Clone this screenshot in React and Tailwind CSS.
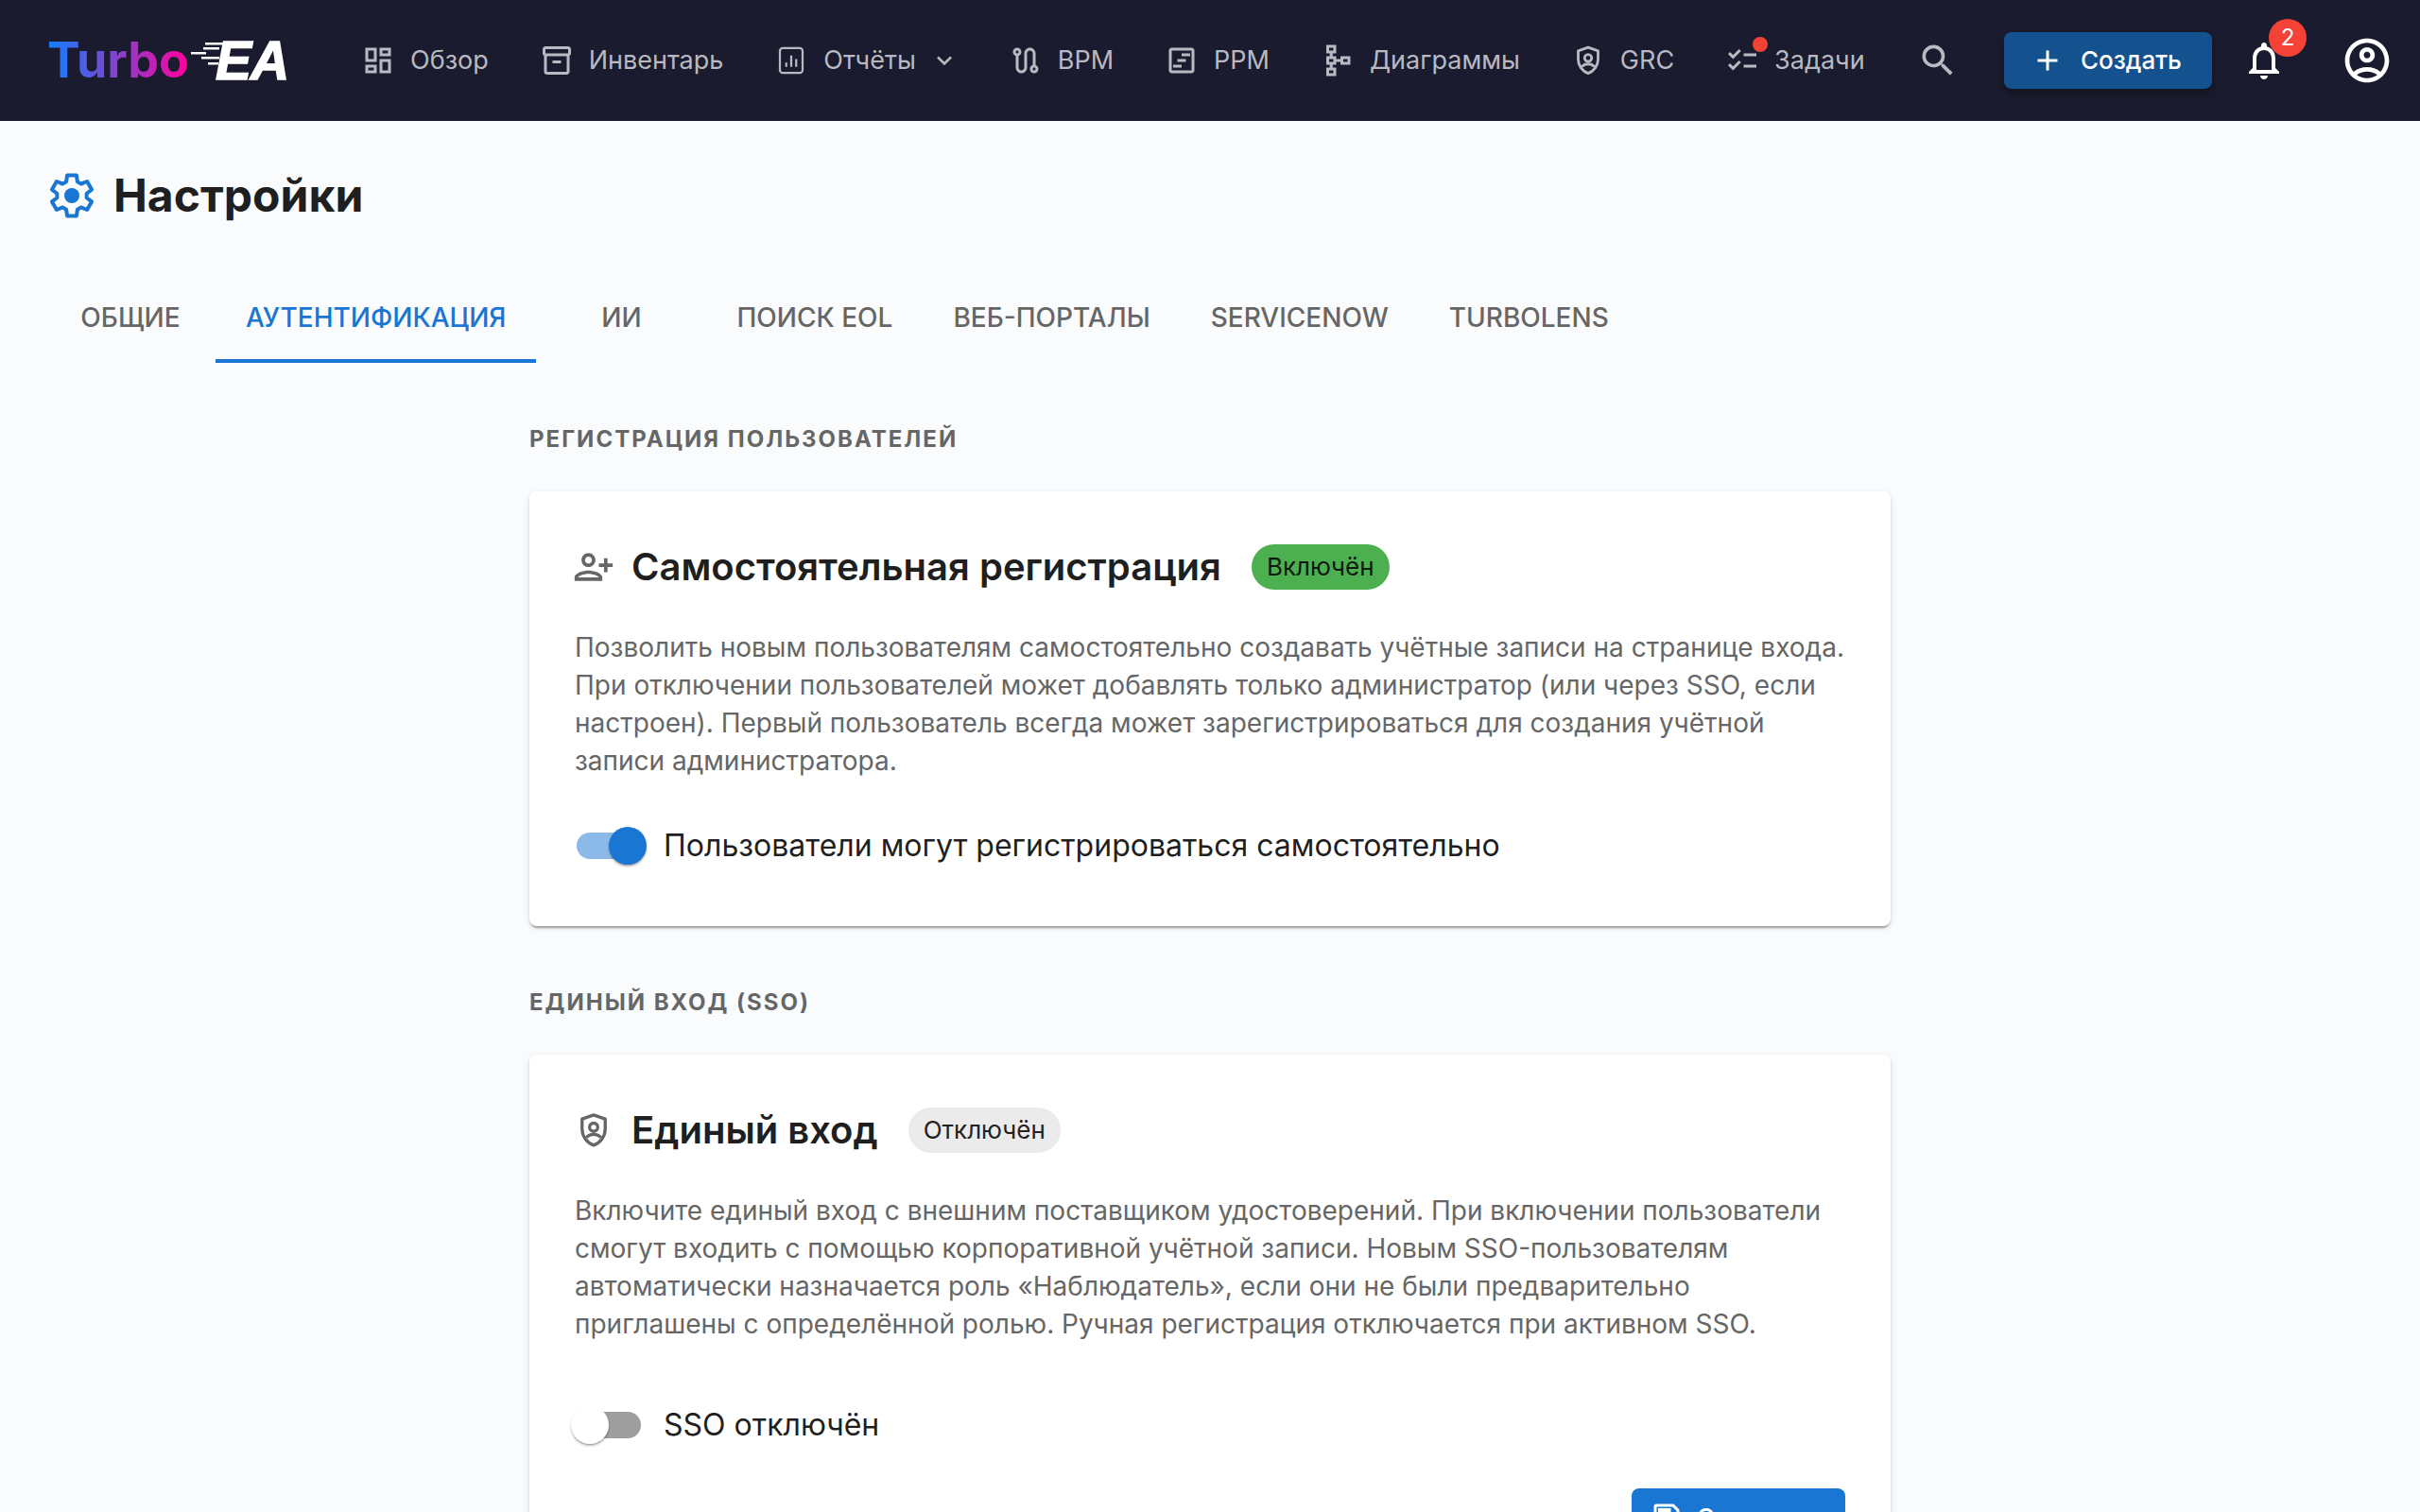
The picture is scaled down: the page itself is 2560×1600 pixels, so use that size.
import {
  MdOutlineDashboard, MdOutlineInventory2, MdExpandMore, MdOutlineRoute,
  MdOutlineViewTimeline, MdOutlineSchema, MdOutlineChecklist, MdSearch, MdAdd,
  MdOutlineNotifications, MdOutlineAccountCircle, MdOutlinePersonAdd, MdOutlineSave,
} from 'react-icons/md';

const FONT = 'font-["Inter","Noto_Sans",sans-serif]';

function ShieldAt({ className }) {
  return (
    <svg viewBox="0 0 24 24" fill="none" stroke="currentColor" className={className}>
      <path d="M12 2.8 5 5.2v6c0 4.5 2.9 8.4 7 9.9 4.1-1.5 7-5.4 7-9.9v-6L12 2.8Z" strokeWidth="1.9" strokeLinejoin="round" />
      <circle cx="12" cy="10.2" r="2.5" strokeWidth="1.9" />
      <path d="M7.6 16.4c1.1-1.3 2.6-1.9 4.4-1.9s3.3.6 4.4 1.9" strokeWidth="1.9" />
    </svg>
  );
}

function ReportIcon({ className }) {
  return (
    <svg viewBox="0 0 24 24" fill="none" stroke="currentColor" strokeWidth="1.5" className={className}>
      <rect x="4" y="3.2" width="16" height="17.6" rx="2" />
      <path d="M8.5 16.5v-3M12 16.5V8.5M15.5 16.5v-5.5" />
    </svg>
  );
}

// six toothed gear outline, top and bottom teeth flat
function gearPoints() {
  const pts = [];
  for (let i = 0; i < 6; i++) {
    const a = 90 + i * 60;
    [[-22, 7.9], [-13, 11], [13, 11], [22, 7.9]].forEach(([d, r]) => {
      const t = ((a + d) * Math.PI) / 180;
      pts.push(`${(12 + r * Math.cos(t)).toFixed(2)},${(12 - r * Math.sin(t)).toFixed(2)}`);
    });
  }
  return pts.join(' ');
}

function GearIcon({ className }) {
  return (
    <svg viewBox="0 0 24 24" className={className}>
      <polygon points={gearPoints()} fill="none" stroke="currentColor" strokeWidth="2" strokeLinejoin="round" />
      <circle cx="12" cy="12" r="4" fill="currentColor" />
    </svg>
  );
}

function Logo() {
  return (
    <div className="relative flex items-center w-[256px] h-[48px] select-none">
      <span className="text-[52px] leading-none font-bold bg-linear-to-r/srgb from-[#0f7fff] to-[#ff009c] bg-clip-text text-transparent">
        Turbo
      </span>
      <span className="ml-[28px] text-[57px] leading-none font-black italic text-white font-['Liberation_Sans',sans-serif] tracking-[-1px] [-webkit-text-stroke:1.5px_white]">
        EA
      </span>
      {/* speed lines */}
      <svg viewBox="0 0 60 40" className="absolute left-[140px] top-[2px] w-[60px] h-[40px]">
        <g fill="#fff">
          <rect x="27" y="3" width="23" height="2.5" />
          <rect x="25" y="8" width="17" height="2.5" />
          <rect x="12" y="13" width="16" height="2.5" />
          <rect x="23" y="18" width="19" height="2.5" />
          <rect x="30" y="24" width="11" height="2.5" />
        </g>
      </svg>
    </div>
  );
}

function NavItem({ icon: Icon, label, chevron, dot }) {
  return (
    <div className="relative flex items-center px-6 h-[60px] text-[#b9b9c1]">
      <Icon className="w-9 h-9 shrink-0" />
      {dot && <span className="absolute left-[53px] top-[5px] w-4 h-4 rounded-full bg-[#f44336]" />}
      <span className="ml-4 text-[27px] leading-none pb-[2px]">{label}</span>
      {chevron && <MdExpandMore className="w-8 h-8 ml-[14px] -mr-[2px]" />}
    </div>
  );
}

function Switch({ on }) {
  return (
    <div className="relative w-[80px] h-10 shrink-0">
      <div className={`absolute left-[6px] top-[6px] w-[68px] h-7 rounded-[14px] ${on ? 'bg-[#8cbae8]' : 'bg-[#9e9e9e]'}`} />
      <div className={`absolute top-0 w-10 h-10 rounded-full shadow-[0_2px_2px_-1px_rgba(0,0,0,0.3),0_2px_3px_0_rgba(0,0,0,0.2)] ${on ? 'left-10 bg-[#1976d2]' : 'left-0 bg-white'}`} />
    </div>
  );
}

function Chip({ on, children }) {
  return (
    <span className={`inline-flex items-center h-12 rounded-full px-4 text-[26px] leading-none ${on ? 'bg-[#4caf50] text-[#0f1a0f]' : 'bg-[#ebebeb] text-[#222]'}`}>
      {children}
    </span>
  );
}

function Card({ icon, title, chip, chipOn, lines, switchOn, switchLabel, switchClass, children }) {
  return (
    <div className="bg-white rounded-lg px-12 pt-[56px] pb-[65px] shadow-[0_4px_2px_-2px_rgba(0,0,0,0.2),0_2px_2px_0_rgba(0,0,0,0.14),0_2px_6px_0_rgba(0,0,0,0.12)]">
      <div className="flex items-center h-12">
        {icon}
        <h3 className="text-[40px] leading-none font-semibold text-[#1f1f1f]">{title}</h3>
        <span className="ml-8"><Chip on={chipOn}>{chip}</Chip></span>
      </div>
      <p className="mt-[41px] text-[28px] leading-[40px] text-[#666]">
        {lines.map((l) => <span key={l} className="block whitespace-nowrap">{l}</span>)}
      </p>
      <div className={`flex items-center gap-3 -ml-1 ${switchClass}`}>
        <Switch on={switchOn} />
        <span className="text-[32px] leading-none text-[#1f1f1f] ml-[6px]">{switchLabel}</span>
      </div>
      {children}
    </div>
  );
}

const tabs = ['Общие', 'Аутентификация', 'ИИ', 'Поиск EOL', 'Веб-порталы', 'ServiceNow', 'TurboLens'];

export default function App() {
  return (
    <div className={`${FONT} h-[1600px] overflow-hidden bg-[#fafbfd]`}>
      <nav className="h-32 bg-[#1a1b2e] flex items-center pl-[50px] pr-[28px]">
        <Logo />
        <div className="flex items-center gap-[6px] ml-[52px]">
          <NavItem icon={MdOutlineDashboard} label="Обзор" />
          <NavItem icon={MdOutlineInventory2} label="Инвентарь" />
          <NavItem icon={ReportIcon} label="Отчёты" chevron />
          <NavItem icon={MdOutlineRoute} label="BPM" />
          <NavItem icon={MdOutlineViewTimeline} label="PPM" />
          <NavItem icon={MdOutlineSchema} label="Диаграммы" />
          <NavItem icon={ShieldAt} label="GRC" />
          <NavItem icon={MdOutlineChecklist} label="Задачи" dot />
        </div>
        <div className="ml-auto flex items-center">
          <MdSearch className="w-11 h-11 text-[#b9b9c1]" />
          <button className="ml-12 w-[220px] h-[60px] pl-7 rounded-lg bg-[#14528f] text-white flex items-center shadow-[0_6px_10px_rgba(0,0,0,0.3)]">
            <MdAdd className="w-9 h-9" />
            <span className="ml-[17px] text-[26px] leading-none font-medium">Создать</span>
          </button>
          <div className="relative ml-[31px]">
            <MdOutlineNotifications className="w-12 h-12 text-white" />
            <span className="absolute left-[29px] top-[-20px] w-10 h-10 rounded-full bg-[#f44336] text-white text-[24px] flex items-center justify-center">2</span>
          </div>
          <MdOutlineAccountCircle className="ml-[57px] w-14 h-14 text-white" />
        </div>
      </nav>

      <main className="px-12">
        <div className="flex items-center h-14 mt-[51px]">
          <GearIcon className="w-12 h-12 text-[#1976d2] ml-[4px] mr-[20px]" />
          <h1 className="text-[48px] leading-none font-bold text-[#1f1f1f]">Настройки</h1>
        </div>

        <div className="flex mt-[53px]">
          {tabs.map((t, i) => (
            <div key={t} className={`min-w-[180px] h-24 px-8 flex items-center justify-center uppercase text-[28px] font-medium relative ${i === 1 ? 'text-[#1976d2]' : 'text-[#666]'}`}>
              {t}
              {i === 1 && <span className="absolute left-0 right-0 bottom-0 h-1 bg-[#1976d2]" />}
            </div>
          ))}
        </div>

        <div className="w-[1440px] mx-auto mt-[66px]">
          <h2 className="text-[24px] leading-[30px] font-bold tracking-[2px] uppercase text-[#666]">Регистрация пользователей</h2>
          <div className="mt-[40px]">
            <Card
              icon={<MdOutlinePersonAdd className="w-11 h-11 text-[#666] mr-[18px] -ml-[2px] shrink-0 -scale-x-100" />}
              title="Самостоятельная регистрация"
              chip="Включён"
              chipOn
              lines={[
                'Позволить новым пользователям самостоятельно создавать учётные записи на странице входа.',
                'При отключении пользователей может добавлять только администратор (или через SSO, если',
                'настроен). Первый пользователь всегда может зарегистрироваться для создания учётной',
                'записи администратора.',
              ]}
              switchOn
              switchLabel="Пользователи могут регистрироваться самостоятельно"
              switchClass="mt-[50px]"
            />
          </div>
          <h2 className="mt-[66px] text-[24px] leading-[30px] font-bold tracking-[2px] uppercase text-[#666]">Единый вход (SSO)</h2>
          <div className="mt-[40px]">
            <Card
              icon={<ShieldAt className="w-[42px] h-[42px] text-[#666] mr-[19px] -ml-[1px] shrink-0" />}
              title="Единый вход"
              chip="Отключён"
              lines={[
                'Включите единый вход с внешним поставщиком удостоверений. При включении пользователи',
                'смогут входить с помощью корпоративной учётной записи. Новым SSO-пользователям',
                'автоматически назначается роль «Наблюдатель», если они не были предварительно',
                'приглашены с определённой ролью. Ручная регистрация отключается при активном SSO.',
              ]}
              switchLabel="SSO отключён"
              switchClass="mt-[67px]"
            >
              <div className="flex justify-end mt-[47px]">
                <button className="h-[60px] w-[226px] rounded-lg bg-[#1976d2] text-white flex items-center justify-center gap-[14px] text-[26px] font-medium">
                  <MdOutlineSave className="w-9 h-9" />
                  Сохранить
                </button>
              </div>
            </Card>
          </div>
        </div>
      </main>
    </div>
  );
}
